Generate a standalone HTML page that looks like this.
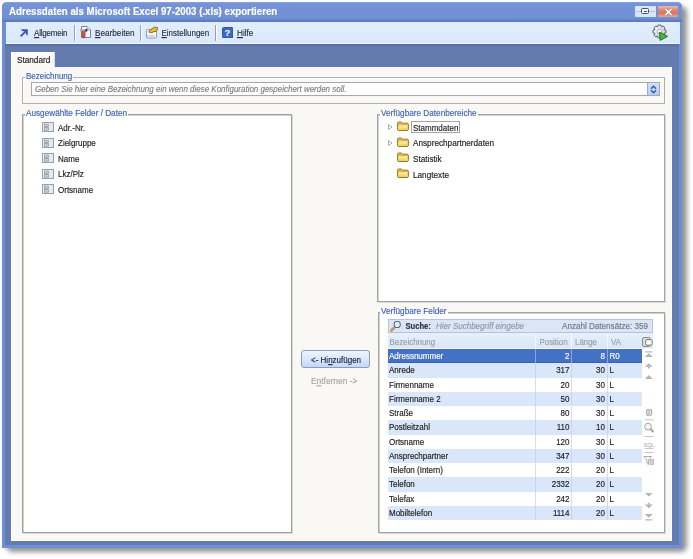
<!DOCTYPE html>
<html><head><meta charset="utf-8">
<style>
*{box-sizing:border-box;margin:0;padding:0}
html,body{width:693px;height:559px;overflow:hidden;background:#fff;font-family:"Liberation Sans",sans-serif;}
.a{position:absolute}
.t{position:absolute;white-space:pre;font-size:8px;line-height:10px;color:#222;transform-origin:0 7.8px;transform:scaleY(1.18);-webkit-text-stroke:0.15px currentColor}
#shadow{left:6px;top:6px;width:681px;height:546px;background:rgba(60,60,60,.55);filter:blur(2.5px);border-radius:6px}
#win{left:2px;top:2px;width:680px;height:545.5px;background:#6e8ed6;border-radius:5px 5px 0 0;overflow:hidden}
#title{left:0;top:0;width:680px;height:20px;background:linear-gradient(#8aa6e2,#7593d6 8%,#7191d4 80%,#6484c8 90%,#5a78bc)}
#tbar{left:6px;top:21px;width:673.5px;height:23px;background:linear-gradient(#e2eefd,#dae8fb);border-top:1px solid #5a78c4;border-bottom:1px solid #eef5ff}
#band{left:5px;top:44px;width:674px;height:501px;background:#637bae;border-top:2px solid #5870a4}
#content{left:11px;top:67px;width:661px;height:474px;background:#f9f8f4;border-left:1px solid #fff;border-right:1px solid #fff;border-bottom:1px solid #fff}
#tab{left:11px;top:52px;width:44px;height:16px;background:#f9f8f4;border-left:1px solid #fff;border-top:1px solid #fff;border-right:1px solid #d8dce8}
.gb{position:absolute;border:1px solid #b9b9b4}
.lbl{position:absolute;white-space:pre;font-size:8.2px;line-height:10px;color:#3c62b4;background:#f9f8f4;padding:0 1px;transform-origin:0 7.8px;transform:scaleY(1.15);-webkit-text-stroke:0.12px currentColor}
.sep{position:absolute;top:25px;width:2px;height:16px;background:#95a0b4;border-right:1px solid #fff}
.tbt{position:absolute;white-space:pre;font-size:8.2px;line-height:10px;color:#1e2a3a;top:28.5px;transform-origin:0 7.8px;transform:scaleY(1.15);-webkit-text-stroke:0.12px currentColor}
.u{text-decoration:underline}
.row{position:absolute;left:0;width:254px;height:14.17px}
</style></head><body>
<div id="shadow" class="a"></div>
<div id="win" class="a">
  <div id="title" class="a"></div>
</div>
<div class="t" style="left:9px;top:4.50px;font-size:10.6px;font-weight:bold;color:#fff;line-height:12px;transform-origin:0 0;transform:scaleX(0.915)">Adressdaten als Microsoft Excel 97-2003 (.xls) exportieren</div>
<!-- window buttons -->
<div class="a" style="left:635px;top:6px;width:21px;height:11px;background:#d8e6fa;border-radius:1px"></div>
<div class="a" style="left:636px;top:11px;width:19px;height:1px;background:#b8c4d8"></div>
<div class="a" style="left:641px;top:8.3px;width:8px;height:6.2px;border:1.2px solid #4a5266;background:#f4f6fa;border-radius:1.5px"></div>
<div class="a" style="left:643.5px;top:10.8px;width:3px;height:1.2px;background:#4a5266"></div>
<div class="a" style="left:658px;top:6px;width:20px;height:11px;background:linear-gradient(#f2b8ac,#e08a7a 35%,#d67666 65%,#eaa898);border-radius:1px"></div>
<svg class="a" style="left:664px;top:7.5px" width="9" height="8" viewBox="0 0 9 8"><path d="M1.5 1.2 L7.5 6.8 M7.5 1.2 L1.5 6.8" stroke="#7a4a40" stroke-width="2.6" stroke-opacity=".5"/><path d="M1.5 1.2 L7.5 6.8 M7.5 1.2 L1.5 6.8" stroke="#fff" stroke-width="1.7"/></svg>

<div id="tbar" class="a"></div>
<div id="band" class="a"></div>
<div id="tab" class="a"></div>
<div id="content" class="a"></div>
<div class="t" style="left:17px;top:55.80px;font-size:8.2px;color:#202020">Standard</div>

<!-- toolbar items -->
<svg class="a" style="left:18.5px;top:28px" width="10" height="10" viewBox="0 0 10 10"><path d="M1.6 8.4 L7.4 2.6" stroke="#3558b8" stroke-width="2" fill="none"/><path d="M1.8 1.2 H8.8 V7.8 L6.8 6 V3.2 H3.6 Z" fill="#3558b8"/></svg>
<div class="tbt" style="left:34px;letter-spacing:-0.2px;font-size:8px"><span class="u">A</span>llgemein</div>
<div class="sep" style="left:74px"></div>
<svg class="a" style="left:79px;top:25px" width="13" height="15" viewBox="0 0 13 15"><path d="M2.5 1.5 H8 L11.5 5 V12.5 H2.5 Z" fill="#f6f8fd" stroke="#6c7690" stroke-width=".9"/><path d="M8 1.5 V5 H11.5" fill="#dde3ee" stroke="#6c7690" stroke-width=".7"/><rect x="1" y="4.2" width="7.2" height="2.3" rx=".8" fill="#a4aab4"/><rect x="6.3" y="4.2" width="1.9" height="2.3" fill="#282828"/><path d="M3.1 6.4 H6.1 V11.8 Q4.6 14.2 3.1 11.8 Z" fill="#dc5040" stroke="#8a2418" stroke-width=".5"/></svg>
<div class="tbt" style="left:95px"><span class="u">B</span>earbeiten</div>
<div class="sep" style="left:140px"></div>
<svg class="a" style="left:145px;top:25px" width="14" height="14" viewBox="0 0 14 14"><rect x="1.4" y="4.6" width="10.2" height="8.4" rx=".8" fill="#f4f6fa" stroke="#8494ac" stroke-width=".9"/><path d="M2.8 10 V11.5 M4.5 11 H9.5" stroke="#a0a8b8" stroke-width=".9"/><path d="M3.6 7 Q6 3.4 9.6 2.2 L12.4 2.6 Q13 4.4 11.2 6.4 Q8.8 6.2 6.6 7.8 Z" fill="#e8be28" stroke="#6a5418" stroke-width=".8" stroke-linejoin="round"/></svg>
<div class="tbt" style="left:161.5px;font-size:7.95px"><span class="u">E</span>instellungen</div>
<div class="sep" style="left:215px"></div>
<svg class="a" style="left:221.8px;top:26.8px" width="11.5" height="11.5" viewBox="0 0 11.5 11.5"><rect x="0.5" y="0.5" width="10.5" height="10.5" rx="1.2" fill="#3c68c4" stroke="#2a4a9a" stroke-width=".9"/><text x="5.5" y="9.3" font-size="9.5" font-weight="bold" fill="#fff" text-anchor="middle" font-family="Liberation Sans">?</text></svg>
<div class="tbt" style="left:237px"><span class="u">H</span>ilfe</div>
<!-- gear icon -->
<svg class="a" style="left:652px;top:24px" width="17" height="17" viewBox="0 0 17 17">
<defs><linearGradient id="gg" x1="0" y1="0" x2="1" y2="1"><stop offset="0" stop-color="#ffffff"/><stop offset="1" stop-color="#b8c0c8"/></linearGradient></defs>
<path d="M12.14 5.64 L13.96 6.14 L13.96 8.86 L12.14 9.36 L12.09 9.47 L13.03 11.11 L11.11 13.03 L9.47 12.09 L9.36 12.14 L8.86 13.96 L6.14 13.96 L5.64 12.14 L5.53 12.09 L3.89 13.030 L1.97 11.11 L2.91 9.47 L2.86 9.36 L1.04 8.86 L1.04 6.14 L2.86 5.64 L2.91 5.53 L1.97 3.89 L3.89 1.97 L5.53 2.91 L5.64 2.86 L6.14 1.04 L8.86 1.04 L9.36 2.86 L9.47 2.91 L11.11 1.97 L13.03 3.89 L12.09 5.53 Z" fill="url(#gg)" stroke="#5a626c" stroke-width="1"/>
<circle cx="7.5" cy="7.5" r="2.2" fill="#fff" stroke="#8a949e" stroke-width=".8"/>
<path d="M7.6 8.2 L15.6 12.4 L8.2 16.4 Z" fill="#4cb83a" stroke="#2a6e1e" stroke-width="1" stroke-linejoin="round"/>
</svg>

<!-- Bezeichnung groupbox -->
<div class="gb" style="left:22px;top:77px;width:643px;height:27px;border-color:#b0b0aa;box-shadow:inset 1px 1px 0 #fff"></div>
<div class="lbl" style="left:25px;top:72.1px;font-size:8px">Bezeichnung</div>
<div class="a" style="left:31px;top:82px;width:629px;height:14px;background:#fff;border:1px solid #a8a8a8"></div>
<div class="t" style="left:35px;top:85.30px;font-style:italic;color:#7e7e7e;font-size:7.97px">Geben Sie hier eine Bezeichnung ein wenn diese Konfiguration gespeichert werden soll.</div>
<div class="a" style="left:647px;top:83px;width:12px;height:12px;background:linear-gradient(#d0e0fc,#b4ccf4);border-left:1px solid #98acd0"></div>
<svg class="a" style="left:650px;top:85px" width="7" height="9" viewBox="0 0 7 9"><path d="M1 3.8 L3.5 1.2 L6 3.8 M1 5.2 L3.5 7.8 L6 5.2" stroke="#34549a" stroke-width="1.3" fill="none"/></svg>

<!-- Ausgewählte Felder groupbox -->
<div class="gb" style="left:22px;top:114px;width:270px;height:419px;background:#fff;border:1px solid #a0a09c;box-shadow:inset 1px 1px 0 #d0d0cc, 1px 1px 0 #d8d8d4"></div>
<div class="lbl" style="left:25px;top:109px;background:linear-gradient(#f9f8f4 50%,#fff 50%)">Ausgewählte Felder / Daten</div>

<!-- left list items -->
<svg width="0" height="0" style="position:absolute"><defs>
<g id="fld"><rect x="0.5" y="0.5" width="11" height="9" fill="#f4f6f8" stroke="#9aa0a8"/><rect x="7.5" y="1" width="3.5" height="8" fill="#dfeaf6"/><rect x="2.3" y="2" width="4.2" height="2.6" fill="#c4ccd4" stroke="#8c949c" stroke-width=".7"/><rect x="2.3" y="5.6" width="4.2" height="2.6" fill="#c4ccd4" stroke="#8c949c" stroke-width=".7"/></g>
<g id="fold"><path d="M0.6 2.2 Q0.6 1 1.8 1 H4.4 L5.6 2.2 H10.2 Q11.4 2.2 11.4 3.4 V8.4 Q11.4 9.5 10.3 9.5 H1.7 Q0.6 9.5 0.6 8.4 Z" fill="#e0b848" stroke="#9a7a28" stroke-width="1"/><path d="M1.3 4.2 H10.7 V8.3 Q10.7 8.9 10.1 8.9 H1.9 Q1.3 8.9 1.3 8.3 Z" fill="url(#fg)"/></g><linearGradient id="fg" x1="0" y1="0" x2="0" y2="1"><stop offset="0" stop-color="#fff0a8"/><stop offset="1" stop-color="#f0d060"/></linearGradient>
<g id="tri"><path d="M0.5 0.5 L4 3 L0.5 5.5 Z" fill="#fff" stroke="#a0a0a0" stroke-width=".9"/></g>
</defs></svg>
<svg class="a" style="left:42px;top:122px" width="12" height="10"><use href="#fld"/></svg>
<svg class="a" style="left:42px;top:137.5px" width="12" height="10"><use href="#fld"/></svg>
<svg class="a" style="left:42px;top:153px" width="12" height="10"><use href="#fld"/></svg>
<svg class="a" style="left:42px;top:168.5px" width="12" height="10"><use href="#fld"/></svg>
<svg class="a" style="left:42px;top:184px" width="12" height="10"><use href="#fld"/></svg>
<div class="t" style="left:58px;top:123.50px">Adr.-Nr.</div>
<div class="t" style="left:58px;top:139.00px">Zielgruppe</div>
<div class="t" style="left:58px;top:154.50px">Name</div>
<div class="t" style="left:58px;top:170.00px">Lkz/Plz</div>
<div class="t" style="left:58px;top:185.50px">Ortsname</div>

<!-- middle buttons -->
<div class="a" style="left:301px;top:350px;width:69px;height:18px;border:1px solid #8c9cb8;border-radius:3px;background:linear-gradient(#eef4fd,#dce8fa 45%,#c4d8f6)"></div>
<div class="t" style="left:311px;top:355.50px;color:#1a2440">&lt;- Hi<span class="u">n</span>zufügen</div>
<div class="t" style="left:311px;top:376.00px;color:#a8a8a0;font-size:8.4px">E<span class="u">n</span>tfernen -&gt;</div>

<!-- Verfügbare Datenbereiche -->
<div class="gb" style="left:377px;top:114px;width:288px;height:188px;background:#fff;border:1px solid #a4a4a0;box-shadow:inset 1px 1px 0 #d0d0cc, 1px 1px 0 #d8d8d4"></div>
<div class="lbl" style="left:380px;top:109px;background:linear-gradient(#f9f8f4 50%,#fff 50%)">Verfügbare Datenbereiche</div>
<svg class="a" style="left:387.5px;top:124px" width="5" height="6"><use href="#tri"/></svg>
<svg class="a" style="left:387.5px;top:139.8px" width="5" height="6"><use href="#tri"/></svg>
<svg class="a" style="left:396.5px;top:120.70px" width="12" height="10"><use href="#fold"/></svg>
<svg class="a" style="left:396.5px;top:136.50px" width="12" height="10"><use href="#fold"/></svg>
<svg class="a" style="left:396.5px;top:152.20px" width="12" height="10"><use href="#fold"/></svg>
<svg class="a" style="left:396.5px;top:168.00px" width="12" height="10"><use href="#fold"/></svg>
<div class="a" style="left:411px;top:121px;width:49px;height:12px;border:1px solid #a4a4a4"></div>
<div class="t" style="left:413px;top:123.50px;font-size:8px">Stammdaten</div>
<div class="t" style="left:413px;top:139.30px;font-size:8.2px">Ansprechpartnerdaten</div>
<div class="t" style="left:413px;top:155.00px;font-size:8.2px">Statistik</div>
<div class="t" style="left:413px;top:170.80px;font-size:8.2px">Langtexte</div>

<!-- Verfügbare Felder -->
<div class="gb" style="left:378px;top:312px;width:287px;height:221px;background:#fff;border:1px solid #a4a4a0;box-shadow:inset 1px 1px 0 #d0d0cc, 1px 1px 0 #d8d8d4"></div>
<div class="lbl" style="left:380px;top:307px;background:linear-gradient(#f9f8f4 50%,#fff 50%)">Verfügbare Felder</div>

<!-- search bar -->
<div class="a" style="left:388px;top:319px;width:265px;height:14px;background:#dbe5f5;border:1px solid #b4c2da"></div>
<svg class="a" style="left:390px;top:321px" width="12" height="11" viewBox="0 0 12 11"><path d="M1.4 9.4 L3.6 7.3" stroke="#c8985a" stroke-width="2.8" stroke-linecap="round"/><circle cx="7.2" cy="3.4" r="3.1" fill="#d6f4fa" stroke="#5c6676" stroke-width="1.1"/></svg>
<div class="t" style="left:405.5px;top:322.00px;font-weight:bold;color:#2c3444;font-size:7.6px">Suche:</div>
<div class="t" style="left:436px;top:322.00px;font-style:italic;color:#9098a4;font-size:8px">Hier Suchbegriff eingebe</div>
<div class="t" style="left:562px;top:322.00px;color:#707884;font-size:8.1px">Anzahl Datensätze: 359</div>
<!-- header -->
<div class="a" style="left:388px;top:333px;width:265px;height:16px;background:linear-gradient(#e8f0fb,#d8e6f8);border-bottom:1.5px solid #f2f7fe"></div>
<div class="a" style="left:535px;top:334px;width:1px;height:14px;background:#f4f8fd"></div>
<div class="a" style="left:571px;top:334px;width:1px;height:14px;background:#f4f8fd"></div>
<div class="a" style="left:607px;top:334px;width:1px;height:14px;background:#f4f8fd"></div>
<div class="t" style="left:389.5px;top:338.00px;color:#9a9ea6;font-size:7.9px">Bezeichnung</div>
<div class="t" style="left:539.5px;top:338.00px;color:#9a9ea6;font-size:7.9px">Position</div>
<div class="t" style="left:575px;top:338.20px;color:#9a9ea6;font-size:7.9px">Länge</div>
<div class="t" style="left:611px;top:338.00px;color:#9a9ea6;font-size:7.9px">VA</div>
<svg class="a" style="left:642px;top:336.5px" width="11" height="10" viewBox="0 0 11 10"><rect x="0.6" y="0.6" width="7.5" height="8.8" rx="1.2" fill="#e4e4ec" stroke="#80808a" stroke-width="1"/><rect x="3.6" y="2.6" width="6.6" height="5.6" rx="1.4" fill="#f8faf0" stroke="#6c7060" stroke-width=".9"/><circle cx="6.9" cy="5.4" r="1.6" fill="#fffff4"/></svg>

<div class="a" style="left:387.5px;top:349.00px;width:254.5px;height:14.25px;background:#4470c6;border-bottom:1px solid #3a62b4"></div>
<div class="a" style="left:535px;top:349.00px;width:1px;height:14.25px;background:#86a6e0"></div>
<div class="a" style="left:571px;top:349.00px;width:1px;height:14.25px;background:#86a6e0"></div>
<div class="a" style="left:607px;top:349.00px;width:1px;height:14.25px;background:#86a6e0"></div>
<div class="t" style="left:389px;top:352.00px;color:#fff">Adressnummer</div>
<div class="t" style="left:540px;width:29.5px;text-align:right;top:352.00px;color:#fff">2</div>
<div class="t" style="left:575px;width:30px;text-align:right;top:352.00px;color:#fff">8</div>
<div class="t" style="left:609.5px;top:352.00px;color:#fff">R0</div>
<div class="a" style="left:387.5px;top:363.25px;width:254.5px;height:14.25px;background:#dae7fb"></div>
<div class="a" style="left:535px;top:363.25px;width:1px;height:14.25px;background:#c4d6f2"></div>
<div class="a" style="left:571px;top:363.25px;width:1px;height:14.25px;background:#c4d6f2"></div>
<div class="a" style="left:607px;top:363.25px;width:1px;height:14.25px;background:#c4d6f2"></div>
<div class="t" style="left:389px;top:366.25px;color:#1c1c1c">Anrede</div>
<div class="t" style="left:540px;width:29.5px;text-align:right;top:366.25px;color:#1c1c1c">317</div>
<div class="t" style="left:575px;width:30px;text-align:right;top:366.25px;color:#1c1c1c">30</div>
<div class="t" style="left:609.5px;top:366.25px;color:#1c1c1c">L</div>
<div class="a" style="left:387.5px;top:377.50px;width:254.5px;height:14.25px;background:#ffffff"></div>
<div class="a" style="left:535px;top:377.50px;width:1px;height:14.25px;background:#d2e0f4"></div>
<div class="a" style="left:571px;top:377.50px;width:1px;height:14.25px;background:#d2e0f4"></div>
<div class="a" style="left:607px;top:377.50px;width:1px;height:14.25px;background:#d2e0f4"></div>
<div class="t" style="left:389px;top:380.50px;color:#1c1c1c">Firmenname</div>
<div class="t" style="left:540px;width:29.5px;text-align:right;top:380.50px;color:#1c1c1c">20</div>
<div class="t" style="left:575px;width:30px;text-align:right;top:380.50px;color:#1c1c1c">30</div>
<div class="t" style="left:609.5px;top:380.50px;color:#1c1c1c">L</div>
<div class="a" style="left:387.5px;top:391.75px;width:254.5px;height:14.25px;background:#dae7fb"></div>
<div class="a" style="left:535px;top:391.75px;width:1px;height:14.25px;background:#c4d6f2"></div>
<div class="a" style="left:571px;top:391.75px;width:1px;height:14.25px;background:#c4d6f2"></div>
<div class="a" style="left:607px;top:391.75px;width:1px;height:14.25px;background:#c4d6f2"></div>
<div class="t" style="left:389px;top:394.75px;color:#1c1c1c">Firmenname 2</div>
<div class="t" style="left:540px;width:29.5px;text-align:right;top:394.75px;color:#1c1c1c">50</div>
<div class="t" style="left:575px;width:30px;text-align:right;top:394.75px;color:#1c1c1c">30</div>
<div class="t" style="left:609.5px;top:394.75px;color:#1c1c1c">L</div>
<div class="a" style="left:387.5px;top:406.00px;width:254.5px;height:14.25px;background:#ffffff"></div>
<div class="a" style="left:535px;top:406.00px;width:1px;height:14.25px;background:#d2e0f4"></div>
<div class="a" style="left:571px;top:406.00px;width:1px;height:14.25px;background:#d2e0f4"></div>
<div class="a" style="left:607px;top:406.00px;width:1px;height:14.25px;background:#d2e0f4"></div>
<div class="t" style="left:389px;top:409.00px;color:#1c1c1c">Straße</div>
<div class="t" style="left:540px;width:29.5px;text-align:right;top:409.00px;color:#1c1c1c">80</div>
<div class="t" style="left:575px;width:30px;text-align:right;top:409.00px;color:#1c1c1c">30</div>
<div class="t" style="left:609.5px;top:409.00px;color:#1c1c1c">L</div>
<div class="a" style="left:387.5px;top:420.25px;width:254.5px;height:14.25px;background:#dae7fb"></div>
<div class="a" style="left:535px;top:420.25px;width:1px;height:14.25px;background:#c4d6f2"></div>
<div class="a" style="left:571px;top:420.25px;width:1px;height:14.25px;background:#c4d6f2"></div>
<div class="a" style="left:607px;top:420.25px;width:1px;height:14.25px;background:#c4d6f2"></div>
<div class="t" style="left:389px;top:423.25px;color:#1c1c1c">Postleitzahl</div>
<div class="t" style="left:540px;width:29.5px;text-align:right;top:423.25px;color:#1c1c1c">110</div>
<div class="t" style="left:575px;width:30px;text-align:right;top:423.25px;color:#1c1c1c">10</div>
<div class="t" style="left:609.5px;top:423.25px;color:#1c1c1c">L</div>
<div class="a" style="left:387.5px;top:434.50px;width:254.5px;height:14.25px;background:#ffffff"></div>
<div class="a" style="left:535px;top:434.50px;width:1px;height:14.25px;background:#d2e0f4"></div>
<div class="a" style="left:571px;top:434.50px;width:1px;height:14.25px;background:#d2e0f4"></div>
<div class="a" style="left:607px;top:434.50px;width:1px;height:14.25px;background:#d2e0f4"></div>
<div class="t" style="left:389px;top:437.50px;color:#1c1c1c">Ortsname</div>
<div class="t" style="left:540px;width:29.5px;text-align:right;top:437.50px;color:#1c1c1c">120</div>
<div class="t" style="left:575px;width:30px;text-align:right;top:437.50px;color:#1c1c1c">30</div>
<div class="t" style="left:609.5px;top:437.50px;color:#1c1c1c">L</div>
<div class="a" style="left:387.5px;top:448.75px;width:254.5px;height:14.25px;background:#dae7fb"></div>
<div class="a" style="left:535px;top:448.75px;width:1px;height:14.25px;background:#c4d6f2"></div>
<div class="a" style="left:571px;top:448.75px;width:1px;height:14.25px;background:#c4d6f2"></div>
<div class="a" style="left:607px;top:448.75px;width:1px;height:14.25px;background:#c4d6f2"></div>
<div class="t" style="left:389px;top:451.75px;color:#1c1c1c">Ansprechpartner</div>
<div class="t" style="left:540px;width:29.5px;text-align:right;top:451.75px;color:#1c1c1c">347</div>
<div class="t" style="left:575px;width:30px;text-align:right;top:451.75px;color:#1c1c1c">30</div>
<div class="t" style="left:609.5px;top:451.75px;color:#1c1c1c">L</div>
<div class="a" style="left:387.5px;top:463.00px;width:254.5px;height:14.25px;background:#ffffff"></div>
<div class="a" style="left:535px;top:463.00px;width:1px;height:14.25px;background:#d2e0f4"></div>
<div class="a" style="left:571px;top:463.00px;width:1px;height:14.25px;background:#d2e0f4"></div>
<div class="a" style="left:607px;top:463.00px;width:1px;height:14.25px;background:#d2e0f4"></div>
<div class="t" style="left:389px;top:466.00px;color:#1c1c1c">Telefon (Intern)</div>
<div class="t" style="left:540px;width:29.5px;text-align:right;top:466.00px;color:#1c1c1c">222</div>
<div class="t" style="left:575px;width:30px;text-align:right;top:466.00px;color:#1c1c1c">20</div>
<div class="t" style="left:609.5px;top:466.00px;color:#1c1c1c">L</div>
<div class="a" style="left:387.5px;top:477.25px;width:254.5px;height:14.25px;background:#dae7fb"></div>
<div class="a" style="left:535px;top:477.25px;width:1px;height:14.25px;background:#c4d6f2"></div>
<div class="a" style="left:571px;top:477.25px;width:1px;height:14.25px;background:#c4d6f2"></div>
<div class="a" style="left:607px;top:477.25px;width:1px;height:14.25px;background:#c4d6f2"></div>
<div class="t" style="left:389px;top:480.25px;color:#1c1c1c">Telefon</div>
<div class="t" style="left:540px;width:29.5px;text-align:right;top:480.25px;color:#1c1c1c">2332</div>
<div class="t" style="left:575px;width:30px;text-align:right;top:480.25px;color:#1c1c1c">20</div>
<div class="t" style="left:609.5px;top:480.25px;color:#1c1c1c">L</div>
<div class="a" style="left:387.5px;top:491.50px;width:254.5px;height:14.25px;background:#ffffff"></div>
<div class="a" style="left:535px;top:491.50px;width:1px;height:14.25px;background:#d2e0f4"></div>
<div class="a" style="left:571px;top:491.50px;width:1px;height:14.25px;background:#d2e0f4"></div>
<div class="a" style="left:607px;top:491.50px;width:1px;height:14.25px;background:#d2e0f4"></div>
<div class="t" style="left:389px;top:494.50px;color:#1c1c1c">Telefax</div>
<div class="t" style="left:540px;width:29.5px;text-align:right;top:494.50px;color:#1c1c1c">242</div>
<div class="t" style="left:575px;width:30px;text-align:right;top:494.50px;color:#1c1c1c">20</div>
<div class="t" style="left:609.5px;top:494.50px;color:#1c1c1c">L</div>
<div class="a" style="left:387.5px;top:505.75px;width:254.5px;height:14.25px;background:#dae7fb"></div>
<div class="a" style="left:535px;top:505.75px;width:1px;height:14.25px;background:#c4d6f2"></div>
<div class="a" style="left:571px;top:505.75px;width:1px;height:14.25px;background:#c4d6f2"></div>
<div class="a" style="left:607px;top:505.75px;width:1px;height:14.25px;background:#c4d6f2"></div>
<div class="t" style="left:389px;top:508.75px;color:#1c1c1c">Mobiltelefon</div>
<div class="t" style="left:540px;width:29.5px;text-align:right;top:508.75px;color:#1c1c1c">1114</div>
<div class="t" style="left:575px;width:30px;text-align:right;top:508.75px;color:#1c1c1c">20</div>
<div class="t" style="left:609.5px;top:508.75px;color:#1c1c1c">L</div>
<svg class="a" style="left:643px;top:349px" width="12" height="175" viewBox="0 0 12 175" fill="#b4b4b4" stroke="none">
<rect x="2.3" y="2.3" width="7" height="1.2"/><path d="M1.8 8 L5.8 4.2 L9.8 8 Z"/>
<path d="M1.8 17.8 L5.8 14.2 L9.8 17.8 Z"/><rect x="4.8" y="17.6" width="2" height="1.8"/>
<path d="M1.8 30 L5.8 26 L9.8 30 Z"/>
<text x="6" y="65" font-size="7" fill="#8c8c8c" text-anchor="middle" font-family="Liberation Sans" font-weight="bold">(|)</text>
<rect x="1.5" y="70.3" width="9" height="1" fill="#c4c4c4"/>
<circle cx="5" cy="77.6" r="3.4" fill="#f6f6f6" stroke="#a8a8a8" stroke-width="1"/><path d="M7.4 80 L10.5 83" stroke="#a0a0a0" stroke-width="1.8"/>
<rect x="1.5" y="87" width="9" height="1" fill="#c4c4c4"/>
<text x="6" y="97.5" font-size="5.2" fill="#a0a0a0" text-anchor="middle" font-family="Liberation Sans">SQL</text>
<rect x="1.5" y="99" width="9" height=".8" fill="#bcbcbc"/>
<rect x="1.5" y="103" width="9" height="1" fill="#c4c4c4"/>
<path d="M1 107.5 H8.5 L5.5 111 V115.5 L4 114.5 V111 Z" fill="none" stroke="#a4a4a4" stroke-width=".9"/><rect x="7" y="110.5" width="3.5" height="5" fill="#d4d4d4" stroke="#a4a4a4" stroke-width=".6"/>
<path d="M1.8 143.9 L5.8 147.6 L9.8 143.9 Z"/>
<rect x="4.8" y="153.8" width="2" height="1.9"/><path d="M1.8 155.5 L5.8 159.3 L9.8 155.5 Z"/>
<path d="M1.8 165 L5.8 168.8 L9.8 165 Z"/><rect x="2.3" y="170.3" width="7" height="1.2"/>
</svg>

</body></html>
